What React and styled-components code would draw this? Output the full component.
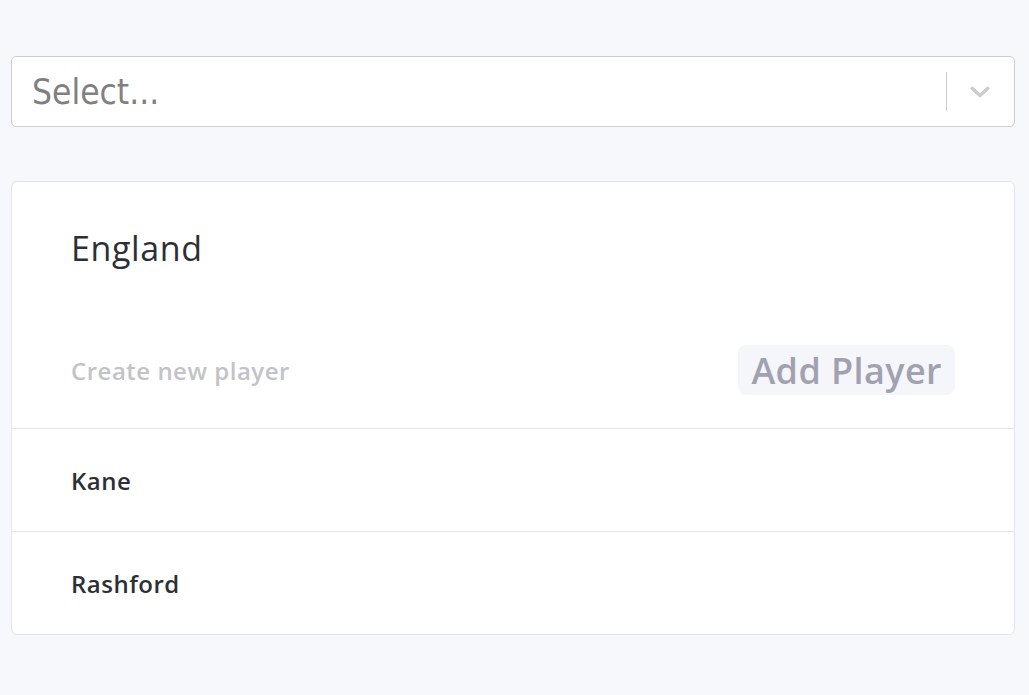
import styled, { createGlobalStyle } from "styled-components";

const GlobalStyle = createGlobalStyle`
  html, body {
    margin: 0;
    padding: 0;
    background: #f7f8fb;
    font-family: "Open Sans", "Lato", sans-serif;
  }
`;

const players = ["Kane", "Rashford"];

function App() {
  return (
    <Page>
      <GlobalStyle />
      <Select>
        <Placeholder>Select...</Placeholder>
        <Indicators>
          <Separator />
          <Chevron viewBox="0 0 20 20">
            <path d="M4.5 7.5 L10 12.5 L15.5 7.5" fill="none" stroke="#cccccc" strokeWidth="2.6" strokeLinecap="round" strokeLinejoin="round" />
          </Chevron>
        </Indicators>
      </Select>
      <Card>
        <Header>
          <Title>England</Title>
          <CreateRow>
            <CreateInput placeholder="Create new player" />
            <AddButton type="button">Add Player</AddButton>
          </CreateRow>
        </Header>
        {players.map((name) => (
          <PlayerRow key={name}>{name}</PlayerRow>
        ))}
      </Card>
    </Page>
  );
}

const Page = styled.div`
  padding: 56px 14px 0 11px;
  display: flex;
  flex-direction: column;
  gap: 54px;
`;

const Select = styled.div`
  height: 71px;
  box-sizing: border-box;
  background: #fff;
  border: 1px solid #cccccc;
  border-radius: 5px;
  display: flex;
  align-items: center;
  padding-left: 20px;
`;

const Placeholder = styled.div`
  flex: 1;
  font-family: "Liberation Sans Narrow", "DejaVu Sans Condensed", "Liberation Sans", sans-serif;
  font-size: 35px;
  color: #808080;
`;

const Indicators = styled.div`
  display: flex;
  align-items: center;
  align-self: stretch;
`;

const Separator = styled.span`
  width: 1px;
  height: 39px;
  align-self: center;
  background: #cccccc;
`;

const Chevron = styled.svg`
  width: 28px;
  height: 28px;
  margin: 0 20px 0 19px;
`;

const Card = styled.div`
  background: #fff;
  border: 1px solid #e2e4ea;
  border-radius: 6px;
  overflow: hidden;
`;

const Header = styled.div`
  padding: 44px 59px 33px 59px;
  border-bottom: 1px solid #e2e4ea;
`;

const Title = styled.h2`
  margin: 0;
  font-size: 34px;
  font-weight: 500;
  letter-spacing: 0.6px;
  color: #2d2f36;
  line-height: 44px;
`;

const CreateRow = styled.div`
  margin-top: 75px;
  display: flex;
  align-items: center;
  justify-content: space-between;
`;

const CreateInput = styled.input`
  border: none;
  outline: none;
  padding: 0;
  font-family: inherit;
  font-size: 24px;
  font-weight: 600;
  letter-spacing: 0.5px;
  width: 400px;
  &::placeholder {
    color: #c2c3c7;
  }
`;

const AddButton = styled.button`
  height: 50px;
  padding: 0 13px;
  border: none;
  border-radius: 8px;
  background: #f5f6fa;
  color: #a1a1b1;
  font-family: inherit;
  font-size: 36px;
  font-weight: 600;
  letter-spacing: 0.4px;
  cursor: pointer;
`;

const PlayerRow = styled.div`
  height: 102px;
  box-sizing: border-box;
  padding: 0 59px;
  display: flex;
  align-items: center;
  font-size: 24px;
  font-weight: 600;
  letter-spacing: 0.5px;
  color: #2d2f36;
  & + & {
    border-top: 1px solid #e2e4ea;
    height: 103px;
  }
`;

export default App;
